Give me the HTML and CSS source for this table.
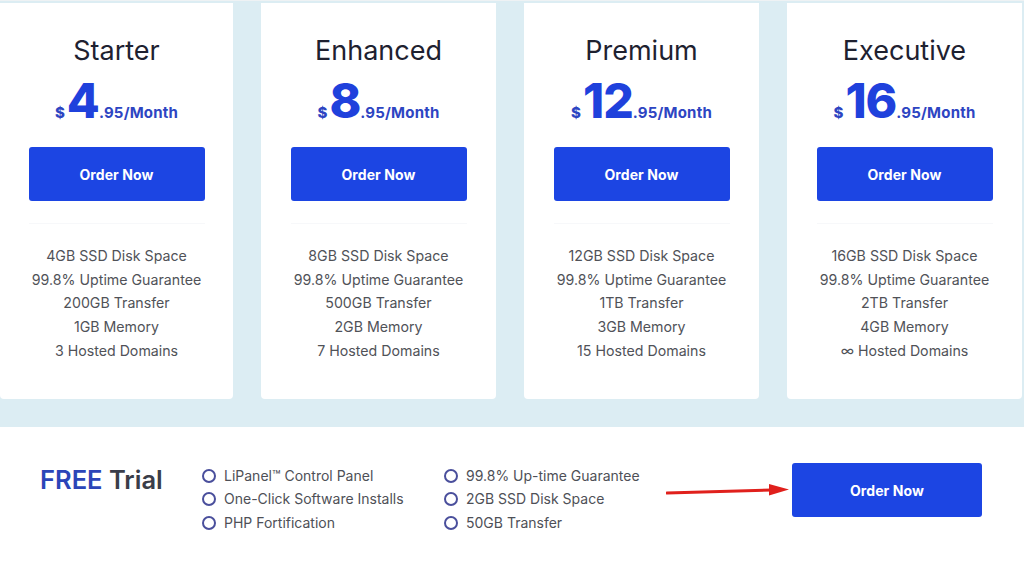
FILE: index.html
```html
<!DOCTYPE html>
<html lang="en">
<head>
<meta charset="utf-8">
<title>Plans</title>
<link rel="stylesheet" href="styles.css">
</head>
<body>
<section class="plans">
  <div class="card">
    <h2 class="name">Starter</h2>
    <div class="price"><span class="cur">$</span><span class="big">4</span><span class="tail">.95/Month</span></div>
    <a class="btn" href="#">Order Now</a>
    <hr class="sep">
    <ul class="feat">
      <li>4GB SSD Disk Space</li>
      <li>99.8% Uptime Guarantee</li>
      <li>200GB Transfer</li>
      <li>1GB Memory</li>
      <li>3 Hosted Domains</li>
    </ul>
  </div>
  <div class="card">
    <h2 class="name">Enhanced</h2>
    <div class="price"><span class="cur">$</span><span class="big">8</span><span class="tail">.95/Month</span></div>
    <a class="btn" href="#">Order Now</a>
    <hr class="sep">
    <ul class="feat">
      <li>8GB SSD Disk Space</li>
      <li>99.8% Uptime Guarantee</li>
      <li>500GB Transfer</li>
      <li>2GB Memory</li>
      <li>7 Hosted Domains</li>
    </ul>
  </div>
  <div class="card">
    <h2 class="name">Premium</h2>
    <div class="price"><span class="cur">$</span><span class="big">12</span><span class="tail">.95/Month</span></div>
    <a class="btn" href="#">Order Now</a>
    <hr class="sep">
    <ul class="feat">
      <li>12GB SSD Disk Space</li>
      <li>99.8% Uptime Guarantee</li>
      <li>1TB Transfer</li>
      <li>3GB Memory</li>
      <li>15 Hosted Domains</li>
    </ul>
  </div>
  <div class="card">
    <h2 class="name">Executive</h2>
    <div class="price"><span class="cur">$</span><span class="big">16</span><span class="tail">.95/Month</span></div>
    <a class="btn" href="#">Order Now</a>
    <hr class="sep">
    <ul class="feat">
      <li>16GB SSD Disk Space</li>
      <li>99.8% Uptime Guarantee</li>
      <li>2TB Transfer</li>
      <li>4GB Memory</li>
      <li>∞ Hosted Domains</li>
    </ul>
  </div>
</section>
<section class="trial">
  <h3 class="trial-title"><span class="free">FREE</span> Trial</h3>
  <ul class="tlist">
    <li>LiPanel™ Control Panel</li>
    <li>One-Click Software Installs</li>
    <li>PHP Fortification</li>
  </ul>
  <ul class="tlist">
    <li>99.8% Up-time Guarantee</li>
    <li>2GB SSD Disk Space</li>
    <li>50GB Transfer</li>
  </ul>
  <svg class="arrow" width="124" height="14" viewBox="0 0 124 14" aria-hidden="true">
    <line x1="1" y1="10" x2="106" y2="7" stroke="#e0201c" stroke-width="3" stroke-linecap="round"/>
    <polygon points="103,1 123,6.5 103,12.5" fill="#e0201c"/>
  </svg>
  <a class="btn btn-trial" href="#">Order Now</a>
</section>
</body>
</html>
```

FILE: styles.css
```css
* { box-sizing: border-box; }
html, body { margin: 0; padding: 0; }
body {
  font-family: "Inter", "Noto Sans", "Liberation Sans", sans-serif;
  background: #ffffff;
  width: 1024px;
  height: 569px;
  overflow: hidden;
}
.plans {
  display: flex;
  gap: 28px;
  background: #dcedf3;
  padding: 2px 0 28px 0;
  height: 427px;
  border-top: 1px solid #eef2f4;
}
.card {
  width: 235px;
  flex: none;
  background: #ffffff;
  border-radius: 0 0 4px 4px;
  display: flex;
  flex-direction: column;
  align-items: center;
  padding-top: 32px;
}
.card:first-child { width: 233px; }
.name {
  margin: 0;
  font-size: 27px;
  line-height: 32px;
  font-weight: 400;
  color: #1e2130;
}
.price {
  margin-top: 13px;
  display: flex;
  align-items: baseline;
  color: #2d45c2;
  height: 42px;
}
.cur {
  font-size: 15px;
  font-weight: 800;
  margin-right: 2px;
}
.big {
  font-size: 48px;
  line-height: 42px;
  font-weight: 800;
  color: #1f41dc;
  letter-spacing: -1px;
}
.tail {
  font-size: 15px;
  font-weight: 700;
  letter-spacing: 0.2px;
}
.btn {
  display: flex;
  align-items: center;
  justify-content: center;
  width: 176px;
  height: 54px;
  margin-top: 25px;
  background: #1c45e3;
  color: #ffffff;
  border-radius: 3px;
  font-size: 14px;
  font-weight: 700;
  text-decoration: none;
  letter-spacing: 0.1px;
}
.sep {
  width: 176px;
  margin: 22px 0 0;
  border: 0;
  border-top: 1px solid #f7f8fa;
}
.feat {
  list-style: none;
  margin: 20px 0 0;
  padding: 0;
  text-align: center;
  font-size: 14.2px;
  line-height: 23.7px;
  color: #505258;
}
.trial {
  display: flex;
  align-items: center;
  height: 142px;
  padding: 0 0 16px 40px;
}
.trial-title {
  margin: 0 37px 22px 0;
  font-size: 25.5px;
  font-weight: 600;
  color: #3a3d49;
  width: 125px;
}
.free { color: #2b45b8; }
.tlist {
  list-style: none;
  margin: 18px 0 0;
  padding: 0;
  font-size: 14px;
  line-height: 23.5px;
  color: #4e5057;
  width: 242px;
}
.tlist li {
  display: flex;
  align-items: center;
}
.tlist li::before {
  content: "";
  width: 10px;
  height: 10px;
  border: 2px solid #4a4f9c;
  border-radius: 50%;
  margin-right: 8px;
  flex: none;
}
.arrow {
  margin-left: -20px;
  margin-top: 0;
  flex: none;
}
.btn-trial {
  margin-top: 0;
  margin-left: 2px;
  width: 190px;
  height: 54px;
}
```
